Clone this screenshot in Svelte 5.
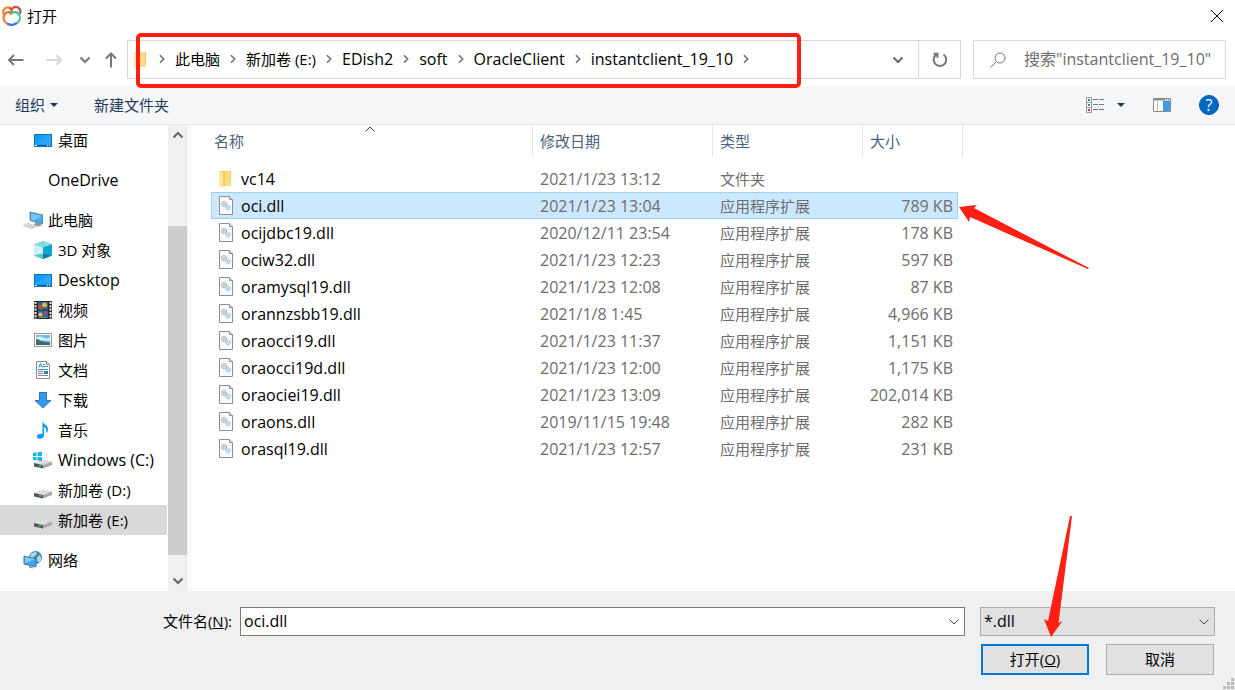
<script lang="ts">
    type TreeItem = { label: string; icon: string; top?: boolean; selected?: boolean };

    const crumbs = ["此电脑", "新加卷 (E:)", "EDish2", "soft", "OracleClient", "instantclient_19_10"];

    const tree: TreeItem[] = [
        { label: "桌面", icon: "desktop" },
        { label: "OneDrive", icon: "", top: true },
        { label: "此电脑", icon: "pc", top: true },
        { label: "3D 对象", icon: "cube" },
        { label: "Desktop", icon: "desktop" },
        { label: "视频", icon: "video" },
        { label: "图片", icon: "picture" },
        { label: "文档", icon: "document" },
        { label: "下载", icon: "download" },
        { label: "音乐", icon: "music" },
        { label: "Windows (C:)", icon: "windrive" },
        { label: "新加卷 (D:)", icon: "drive" },
        { label: "新加卷 (E:)", icon: "drive", selected: true },
        { label: "网络", icon: "network", top: true },
    ];

    const dll = "应用程序扩展";
    const files = [
        { name: "vc14", date: "2021/1/23 13:12", type: "文件夹", size: "" },
        { name: "oci.dll", date: "2021/1/23 13:04", type: dll, size: "789 KB" },
        { name: "ocijdbc19.dll", date: "2020/12/11 23:54", type: dll, size: "178 KB" },
        { name: "ociw32.dll", date: "2021/1/23 12:23", type: dll, size: "597 KB" },
        { name: "oramysql19.dll", date: "2021/1/23 12:08", type: dll, size: "87 KB" },
        { name: "orannzsbb19.dll", date: "2021/1/8 1:45", type: dll, size: "4,966 KB" },
        { name: "oraocci19.dll", date: "2021/1/23 11:37", type: dll, size: "1,151 KB" },
        { name: "oraocci19d.dll", date: "2021/1/23 12:00", type: dll, size: "1,175 KB" },
        { name: "oraociei19.dll", date: "2021/1/23 13:09", type: dll, size: "202,014 KB" },
        { name: "oraons.dll", date: "2019/11/15 19:48", type: dll, size: "282 KB" },
        { name: "orasql19.dll", date: "2021/1/23 12:57", type: dll, size: "231 KB" },
    ];

    let fileName = $state("oci.dll");
    let filter = $state("*.dll");
    let search = $state("");

    // latin-only text is set a touch larger than the CJK text
    const isLatin = (s: string) => /^[\x00-\x7f]+$/.test(s);
</script>

{#snippet icon(kind: string)}
    <svg class="icon" viewBox="0 0 20 20" aria-hidden="true">
        {#if kind === "desktop"}
            <rect x="1.5" y="4.5" width="17" height="12" fill="#0f9bff" stroke="#1272b8" />
            <path d="M2 14 14 5h4v9z" fill="#38adff" opacity=".6" />
            <path d="M2 15.5h16" stroke="#0b5fa5" />
            <path d="M2 15.5h2M14 15.5h1M16 15.5h1" stroke="#fff" />
        {:else if kind === "pc"}
            <path d="M7 2l13 3v9L7 10.500z" fill="#3c8fcb" stroke="#6c808d" stroke-width=".8" />
            <path d="M8 3.200l11 2.600v7L8 9.900z" fill="#3eb0fa" />
            <path d="M8 3.200l11 2.600-8 4.800-3-.7z" fill="#74c6fb" />
            <path d="M12 12v2l-2 1 5 1.500 4-1-2-2.300z" fill="#8b989f" />
            <path d="M0 15.500l5-2.200 9 3-5 2.200z" fill="#e4e7ea" stroke="#b6bcc1" stroke-width=".6" />
            <path d="M3 15.500l7 2.200M5 14.500l6 2.200" stroke="#b6bdc3" stroke-width=".6" />
        {:else if kind === "cube"}
            <path d="M10 1l9 3.500v11L10 19l-9-3.500v-11z" fill="#3fc0cf" />
            <path d="M10 1l9 3.500L10 7.500 1 4.500z" fill="#7fdcdd" />
            <path d="M1 4.500l9 3v6L1 15.500z" fill="#c9f3f3" />
            <path d="M19 4.500l-9 3v6l9 2z" fill="#0fa4d2" />
            <path d="M10 13.500 1 15.500l9 3.500z" fill="#55c9cc" />
            <path d="M10 13.500l9 2L10 19z" fill="#087e9c" />
        {:else if kind === "video"}
            <rect x="1" y="1" width="18" height="18" fill="#2b2b2b" />
            <rect x="5" y="2" width="10" height="7.500" fill="#315ca8" />
            <rect x="5" y="10.500" width="10" height="7.500" fill="#365fa5" />
            <path d="M2.500 2v17M17.500 2v17" stroke="#eee" stroke-width="2" stroke-dasharray="2 1.300" />
            <circle cx="11.500" cy="5" r="2.500" fill="#e2bd22" />
            <circle cx="7" cy="6.500" r="1.700" fill="#df4a2b" />
            <path d="M10 12l4-1-1 4z" fill="#d94828" />
            <circle cx="7.500" cy="14.500" r="2" fill="#e9c72c" />
            <path d="M5 9.500l4-1 1 1zM5 18l5-1.500 5 1.500z" fill="#68a642" />
        {:else if kind === "picture"}
            <rect x="1.500" y="3.500" width="17" height="13" fill="#fff" stroke="#999" />
            <rect x="3" y="5" width="14" height="10" fill="#72b9e8" />
            <path d="M3 7.500q4-2 7 0t7 0v3H3z" fill="#d7eefa" />
            <path d="M3 9q3 0 5 2l9 2v2H3z" fill="#456f5c" />
            <path d="M6 13.500l11-1V15H3z" fill="#33648b" />
        {:else if kind === "document"}
            <path d="M3.500 1.500h10l3 3v14h-13z" fill="#fff" stroke="#8d8d8d" />
            <path d="M13.500 1.500v3h3" fill="#e7e7e7" stroke="#8d8d8d" />
            <path d="M5.500 7.500l2-4 2 4M6.500 6h2M10 4.500h2M10 6.500h5M5 9.500h10" stroke="#2294d4" fill="none" />
            <path d="M5 11.500h5M5 13.500h5M5 15.500h10" stroke="#888" />
            <rect x="11" y="11" width="4" height="3" fill="#367b9d" />
        {:else if kind === "download"}
            <path d="M6.500 2.500h7v8h4.500L10 18 2 10.500h4.500z" fill="#3497ea" stroke="#2878c1" />
        {:else if kind === "music"}
            <path d="M9.500 1c1 4 6 4 5.500 9-.2 1.500-1 2.500-2 3 .8-3 .3-5-2-6v8.500c0 2-2 3.200-4.200 3.200S4 17.800 4 16.500c0-2 2.500-3.200 5.500-2.500z" fill="#0d9cf2" />
        {:else if kind === "drive" || kind === "windrive"}
            <path d="M1 13l9-3.500 9 2-9 3.500z" fill="#dedede" />
            <path d="M1 13l9 2v3.500l-9-2z" fill="#555" />
            <path d="M10 15l9-3.500V15l-9 3.500z" fill="#a9a9a9" />
            <path d="M6 15.500l2 .5" stroke="#3bdb42" stroke-width="1.500" />
            {#if kind === "windrive"}
                <path d="M0 3l3.500-.5V6H0zM4.500 2.300 9 2v4H4.500zM0 7h3.500v3.500L0 10zM4.500 7H9v4l-4.500-.5z" fill="#12b5ee" />
            {/if}
        {:else if kind === "network"}
            <circle cx="12.500" cy="7.500" r="6.500" fill="#3f7fa8" />
            <path d="M8 3.500l5-2 1 3-3 2-2 3-2-2zM14 7l3-2 1.500 4-2 3.500-3-1.500z" fill="#a6d7e5" />
            <path d="M1 6l12 3v8L1 14z" fill="#38a7ef" stroke="#477694" />
            <path d="M2 7l10 2.500L2 13z" fill="#82ccfa" />
            <path d="M6 16l4 1v1.500l-4-.7z" fill="#889aa5" />
        {:else if kind === "folder"}
            <path d="M3 2h12v15H3z" fill="#f2cb63" />
            <path d="M9 2h5v10h1v5H9z" fill="#fadc80" />
            <path d="M3 2l4 2v15l-4-2z" fill="#ffe9a7" />
        {:else}
            <path d="M3.500 .5h10l3 3v15h-13z" fill="#fafafa" stroke="#8e8e8e" />
            <path d="M13.500 .5v3h3" fill="#ddd" stroke="#8e8e8e" />
            <circle cx="8" cy="8" r="2.500" fill="#e7eaec" stroke="#808a91" stroke-dasharray="1.200 .6" />
            <circle cx="8" cy="8" r=".8" fill="#808a91" />
            <circle cx="12" cy="11.500" r="2.200" fill="#e5f4ff" stroke="#72a3c5" stroke-dasharray="1.200 .6" />
            <circle cx="12" cy="11.500" r=".7" fill="#72a3c5" />
        {/if}
    </svg>
{/snippet}

{#snippet chevron(name: string)}
    <svg class="chevron {name}" viewBox="0 0 12 12" aria-hidden="true">
        <path d="M1.500 3.500 6 8l4.500-4.500" />
    </svg>
{/snippet}

<div class="dialog">
    <header class="titlebar">
        <svg class="logo" viewBox="0 0 20 20" aria-hidden="true">
            <g fill="none" stroke-width="2.200" stroke-linecap="round">
                <path d="M1.500 8C0 3 5 0 8 2" stroke="#f08a2c" />
                <path d="M8 2c2 1.500 2 4 1 5.500" stroke="#e2533a" />
                <path d="M3 8c1-2 4-2.500 6-.5" stroke="#e8603a" />
                <path d="M10 3c2-3 6-2.500 7.500 0" stroke="#e0483c" />
                <path d="M17.500 3c1.500 2 1 4-.5 5.500" stroke="#9a5aa6" />
                <path d="M9 7.500C11 5 16 6 17 8.500" stroke="#57b96a" />
                <path d="M3 8c-3 4-1 8.500 3 10" stroke="#f2803a" />
                <path d="M17 8.500c2 3 1 7-3 9" stroke="#52c4a4" />
                <path d="M6 18c2.500 1.200 5.500 1 8-.5" stroke="#3f6fe0" />
            </g>
        </svg>
        <h1>打开</h1>
        <button class="close" aria-label="关闭">
            <svg viewBox="0 0 14 14"><path d="M1 1l12 12M13 1 1 13" /></svg>
        </button>
    </header>

    <div class="navrow">
        <div class="history">
            <button aria-label="后退"><svg viewBox="0 0 16 16"><path d="M15.500 8H1M6 3 1 8l5 5" /></svg></button>
            <button aria-label="前进" disabled><svg viewBox="0 0 16 16"><path d="M.5 8H15M10 3l5 5-5 5" /></svg></button>
            <button class="recent" aria-label="最近浏览的位置">{@render chevron("bold")}</button>
            <button aria-label="上移"><svg viewBox="0 0 16 16"><path d="M8 15.500V1.500M3 6.500l5-5 5 5" /></svg></button>
        </div>
        <div class="address">
            {@render icon("folder")}
            <nav class="crumbs" aria-label="地址">
                {@render chevron("right")}
                {#each crumbs as crumb}
                    <a href="#{crumb}" class:latin={isLatin(crumb)}>{crumb}</a>
                    {@render chevron("right")}
                {/each}
            </nav>
            <button class="drop" aria-label="以前的位置">{@render chevron("bold")}</button>
            <button class="refresh" aria-label="刷新">
                <svg viewBox="0 0 16 16"><path d="M11.500 2.500A6.300 6.300 0 1 1 4.200 2.600M1.500 1.800h4v4" /></svg>
            </button>
        </div>
        <label class="search">
            <svg viewBox="0 0 16 16" aria-hidden="true"><circle cx="10" cy="6" r="5" /><path d="M6.400 9.600.5 15.500" /></svg>
            <input type="text" aria-label="搜索" placeholder={'搜索"instantclient_19_10"'} bind:value={search} />
        </label>
    </div>

    <div class="toolbar">
        <button>组织 <span class="caret"></span></button>
        <button>新建文件夹</button>
        <div class="tools">
            <button class="view" aria-label="更改视图">
                <svg viewBox="0 0 18 16">
                    <path d="M.5.500h5v15h-5zM.5 5.500h5M.5 10.500h5" fill="#fff" stroke="#999" />
                    <path d="M2 3h2" stroke="#31935e" stroke-width="2" />
                    <path d="M2 8h2" stroke="#326fc0" stroke-width="2" />
                    <path d="M2 13h2" stroke="#cf3030" stroke-width="2" />
                    <path d="M7 2.500h5M13 2.500h5M7 7.500h5M13 7.500h5M7 12.500h5M13 12.500h5" stroke="#777" />
                </svg>
                <span class="caret"></span>
            </button>
            <button aria-label="预览窗格">
                <svg viewBox="0 0 18 16">
                    <path d="M.5 1.500h17v13H.500z" fill="#fff" stroke="#8b8b8b" />
                    <path d="M0 2.500h18" stroke="#8b8b8b" stroke-width="2" />
                    <path d="M4.500 3v11" stroke="#bbb" />
                    <path d="M10 4h7v10h-7z" fill="#3e9be8" />
                    <path d="M12 2.500h1M14 2.500h1M16 2.500h1" stroke="#fff" />
                </svg>
            </button>
            <button class="help" aria-label="获取帮助">?</button>
        </div>
    </div>

    <main>
        <aside>
            <ul>
                {#each tree as item, i}
                    <li class:top={item.top} class:after-group={i === 1 || i === 2 || i === 13}>
                        <a href="#{item.label}" class:selected={item.selected} class:latin={isLatin(item.label)}>
                            {#if item.icon}{@render icon(item.icon)}{:else}<span class="icon"></span>{/if}
                            {item.label}
                        </a>
                    </li>
                {/each}
            </ul>
            <div class="scrollbar">
                <button aria-label="向上滚动">{@render chevron("up bold")}</button>
                <span class="above"></span>
                <span class="thumb"></span>
                <span class="below"></span>
                <button aria-label="向下滚动">{@render chevron("bold")}</button>
            </div>
        </aside>

        <section class="list">
            <table>
                <colgroup>
                    <col class="c-name" /><col class="c-date" /><col class="c-type" /><col class="c-size" /><col class="c-edge" />
                </colgroup>
                <thead>
                    <tr>
                        <th>名称<span class="sort">{@render chevron("up")}</span></th>
                        <th>修改日期</th>
                        <th>类型</th>
                        <th colspan="2">大小</th>
                    </tr>
                </thead>
                <tbody>
                    {#each files as file}
                        <tr class:selected={file.name === fileName}>
                            <td class="name latin"><span>{@render icon(file.size ? "dll" : "folder")}{file.name}</span></td>
                            <td class="latin">{file.date}</td>
                            <td>{file.type}</td>
                            <td class="size latin">{file.size}</td>
                            <td class="edge"></td>
                        </tr>
                    {/each}
                </tbody>
            </table>
        </section>
    </main>

    <footer>
        <div class="fields">
            <label for="filename">文件名(<u>N</u>):</label>
            <div class="combo">
                <input id="filename" type="text" bind:value={fileName} />
                <button aria-label="显示历史">{@render chevron("")}</button>
            </div>
            <div class="filter">
                <select aria-label="文件类型" bind:value={filter}>
                    <option>*.dll</option>
                </select>
                {@render chevron("")}
            </div>
        </div>
        <div class="actions">
            <button class="primary">打开(<u>O</u>)</button>
            <button>取消</button>
        </div>
        <svg class="grip" viewBox="0 0 12 12" aria-hidden="true">
            <path d="M8 0h3v3H8zM4 4h3v3H4zM8 4h3v3H8zM0 8h3v3H0zM4 8h3v3H4zM8 8h3v3H8z" fill="#b8b8b8" />
        </svg>
    </footer>

    <!-- red marks laid over the dialog -->
    <div class="mark-box"></div>
    <svg class="mark mark-row" viewBox="0 0 132 66" aria-hidden="true">
        <path d="M0 3 18 1l-3 3 115 60-1 1L11 13l-1 5z" />
    </svg>
    <svg class="mark mark-open" viewBox="0 0 20 122" aria-hidden="true">
        <path d="M26 0h2L14.500 107l4-2L7 121 0 103l4 2z" />
    </svg>
</div>

<style>
    :global(body) {
        margin: 0;
        background: #fff;
    }
    .dialog {
        position: relative;
        display: flex;
        flex-direction: column;
        min-height: 100vh;
        overflow: hidden;
        font-family: "Open Sans", "Noto Sans CJK SC", sans-serif;
        font-size: 15px;
        line-height: 20px;
        color: #000;
    }
    .dialog *,
    .dialog *::before {
        box-sizing: border-box;
    }
    button,
    input,
    select {
        font: inherit;
        color: inherit;
        margin: 0;
        padding: 0;
        border: 0;
        border-radius: 0;
        background: none;
        outline: none;
    }
    a {
        color: inherit;
        text-decoration: none;
    }
    svg {
        display: block;
        flex: none;
    }
    .latin {
        font-size: 16px;
    }
    .icon {
        width: 20px;
        height: 20px;
        flex: none;
    }
    .chevron {
        width: 12px;
        height: 12px;
        fill: none;
        stroke: #444;
        stroke-width: 1;
    }
    .bold {
        stroke: #666;
        stroke-width: 2;
    }
    .up {
        transform: rotate(180deg);
    }
    .right {
        width: 10px;
        transform: rotate(-90deg);
        stroke: #777;
        stroke-width: 2;
    }

    .titlebar {
        display: flex;
        align-items: center;
        height: 32px;
        padding: 0 11px 0 2px;
        gap: 5px;
    }
    .titlebar h1 {
        margin: 0;
        font-size: 15px;
        font-weight: 400;
    }
    .logo {
        width: 20px;
        height: 20px;
    }
    .close {
        margin-left: auto;
    }
    .close svg {
        width: 14px;
        height: 14px;
        fill: none;
        stroke: #000;
    }

    .navrow {
        display: flex;
        height: 54px;
        padding: 8px 9px 7px 8px;
    }
    .history {
        display: flex;
        align-items: center;
        gap: 22px;
        width: 119px;
    }
    .history svg {
        width: 16px;
        height: 16px;
        fill: none;
        stroke: #777;
        stroke-width: 2;
    }
    .history button:disabled svg {
        stroke: #d8d8d8;
    }
    .history .recent {
        margin: 0 -10px 0 -5px;
    }
    .history .recent :global(svg) {
        width: 12px;
        height: 12px;
    }
    .address {
        display: flex;
        align-items: center;
        flex: 1;
        border: 1px solid #d9d9d9;
    }
    .address > .icon {
        margin-left: 3px;
    }
    .crumbs {
        display: flex;
        align-items: center;
        flex: 1;
        gap: 8px;
        margin-left: 6px;
        padding-bottom: 2px;
    }
    .drop {
        display: grid;
        place-items: center;
        width: 40px;
        height: 100%;
    }
    .refresh {
        display: grid;
        place-items: center;
        width: 42px;
        height: 100%;
        border-left: 1px solid #d9d9d9;
    }
    .refresh svg {
        width: 16px;
        height: 16px;
        fill: none;
        stroke: #777;
        stroke-width: 2;
    }
    .search {
        display: flex;
        align-items: center;
        gap: 18px;
        width: 253px;
        margin-left: 12px;
        padding-left: 16px;
        border: 1px solid #d9d9d9;
    }
    .search svg {
        width: 16px;
        height: 16px;
        fill: none;
        stroke: #777;
    }
    .search input {
        flex: 1;
        min-width: 0;
        padding-bottom: 2px;
        font-size: 16px;
    }
    .search input::placeholder {
        color: #6d6d6d;
        opacity: 1;
    }

    .toolbar {
        display: flex;
        align-items: center;
        gap: 36px;
        height: 39px;
        padding: 0 16px 0 15px;
        background: #f5f6f7;
        border-bottom: 1px solid #e4e6e8;
        color: #1e395b;
    }
    .toolbar button {
        display: flex;
        align-items: center;
        gap: 5px;
    }
    .caret {
        border: 4px solid transparent;
        border-top-color: #1e395b;
        border-bottom: 0;
    }
    .tools {
        display: flex;
        align-items: center;
        gap: 28px;
        margin-left: auto;
    }
    .tools svg {
        width: 18px;
        height: 16px;
    }
    .toolbar .view {
        gap: 13px;
    }
    .toolbar .help {
        justify-content: center;
        width: 20px;
        height: 20px;
        border: 1px solid #00539f;
        border-radius: 50%;
        background: #0067c5;
        color: #fff;
        font-size: 16px;
    }

    main {
        display: flex;
        flex: 1;
    }
    aside {
        display: flex;
        width: 191px;
        border-right: 1px solid #f5f5f5;
    }
    ul {
        flex: 1;
        margin: 0;
        padding: 0;
        list-style: none;
    }
    .after-group {
        margin-top: 10px;
    }
    li a {
        display: flex;
        align-items: center;
        gap: 5px;
        height: 30px;
        margin-right: 1px;
        padding-left: 33px;
        white-space: nowrap;
    }
    .top a {
        padding-left: 23px;
    }
    li .selected {
        background: #d9d9d9;
    }
    .scrollbar {
        display: flex;
        flex-direction: column;
        width: 20px;
        margin-right: 2px;
        background: #f0f0f0;
    }
    .scrollbar button {
        display: grid;
        place-items: center;
        height: 20px;
    }
    .above {
        flex: 81;
    }
    .thumb {
        flex: 329;
        margin-right: 1px;
        background: #cdcdcd;
    }
    .below {
        flex: 16;
    }

    .list {
        flex: 1;
        padding-left: 20px;
    }
    table {
        width: 752px;
        table-layout: fixed;
        border-collapse: separate;
        border-spacing: 0;
        color: #6d6d6d;
    }
    .c-name {
        width: 322px;
    }
    .c-date {
        width: 180px;
    }
    .c-type {
        width: 150px;
    }
    .c-size {
        width: 95px;
    }
    .c-edge {
        width: 5px;
    }
    th {
        position: relative;
        height: 32px;
        padding: 0 0 0 7px;
        border-right: 1px solid #e5e5e5;
        color: #4c607a;
        font-weight: 400;
        text-align: left;
    }
    th:first-child {
        padding-left: 3px;
    }
    .sort {
        position: absolute;
        top: -2px;
        left: 50%;
        margin-left: -8px;
    }
    tbody::before {
        content: "";
        display: block;
        height: 8px;
    }
    td {
        height: 27px;
        padding: 0 0 0 7px;
        border: 1px solid transparent;
        border-width: 1px 0;
    }
    .name {
        padding-left: 4px;
        border-left-width: 1px;
        color: #000;
    }
    .name span {
        display: flex;
        align-items: center;
        gap: 5px;
    }
    .size {
        padding: 0 4px 0 0;
        border-right-width: 1px;
        text-align: right;
    }
    .edge {
        padding: 0;
    }
    tr.selected td:not(.edge) {
        background: #cce8ff;
        border-color: #99d1ff;
    }

    footer {
        position: relative;
        padding: 16px 20px 15px;
        background: #f0f0f0;
    }
    .fields {
        display: flex;
        align-items: center;
    }
    .fields label {
        width: 220px;
        padding: 0 8px 2px 0;
        text-align: right;
    }
    .combo {
        display: flex;
        flex: 1;
        height: 29px;
        border: 1px solid #7a7a7a;
        background: #fff;
    }
    .combo input {
        flex: 1;
        padding: 0 0 2px 3px;
        font-size: 16px;
    }
    .combo button {
        display: grid;
        place-items: center;
        width: 20px;
    }
    .filter {
        position: relative;
        width: 235px;
        margin-left: 15px;
    }
    .filter select {
        display: block;
        appearance: none;
        width: 100%;
        height: 29px;
        padding: 0 0 2px 3px;
        border: 1px solid #adadad;
        background: #e1e1e1;
        font-size: 16px;
    }
    .filter .chevron {
        position: absolute;
        top: 9px;
        right: 5px;
        pointer-events: none;
    }
    .actions {
        display: flex;
        justify-content: flex-end;
        gap: 17px;
        padding: 8px 1px 0 0;
    }
    .actions button {
        width: 108px;
        height: 31px;
        padding-bottom: 2px;
        border: 1px solid #adadad;
        background: #e1e1e1;
    }
    .actions .primary {
        border: 2px solid #0078d7;
    }
    .grip {
        position: absolute;
        right: 0;
        bottom: 0;
        width: 12px;
        height: 12px;
    }

    .mark-box {
        position: absolute;
        top: 33px;
        left: 136px;
        width: 665px;
        height: 55px;
        border: 4px solid #ff2015;
        border-radius: 5px;
        pointer-events: none;
    }
    .mark {
        position: absolute;
        overflow: visible;
        fill: #ff2015;
        pointer-events: none;
    }
    .mark-row {
        top: 204px;
        left: 959px;
        width: 132px;
        height: 66px;
    }
    .mark-open {
        top: 516px;
        left: 1044px;
        width: 20px;
        height: 122px;
    }
</style>
